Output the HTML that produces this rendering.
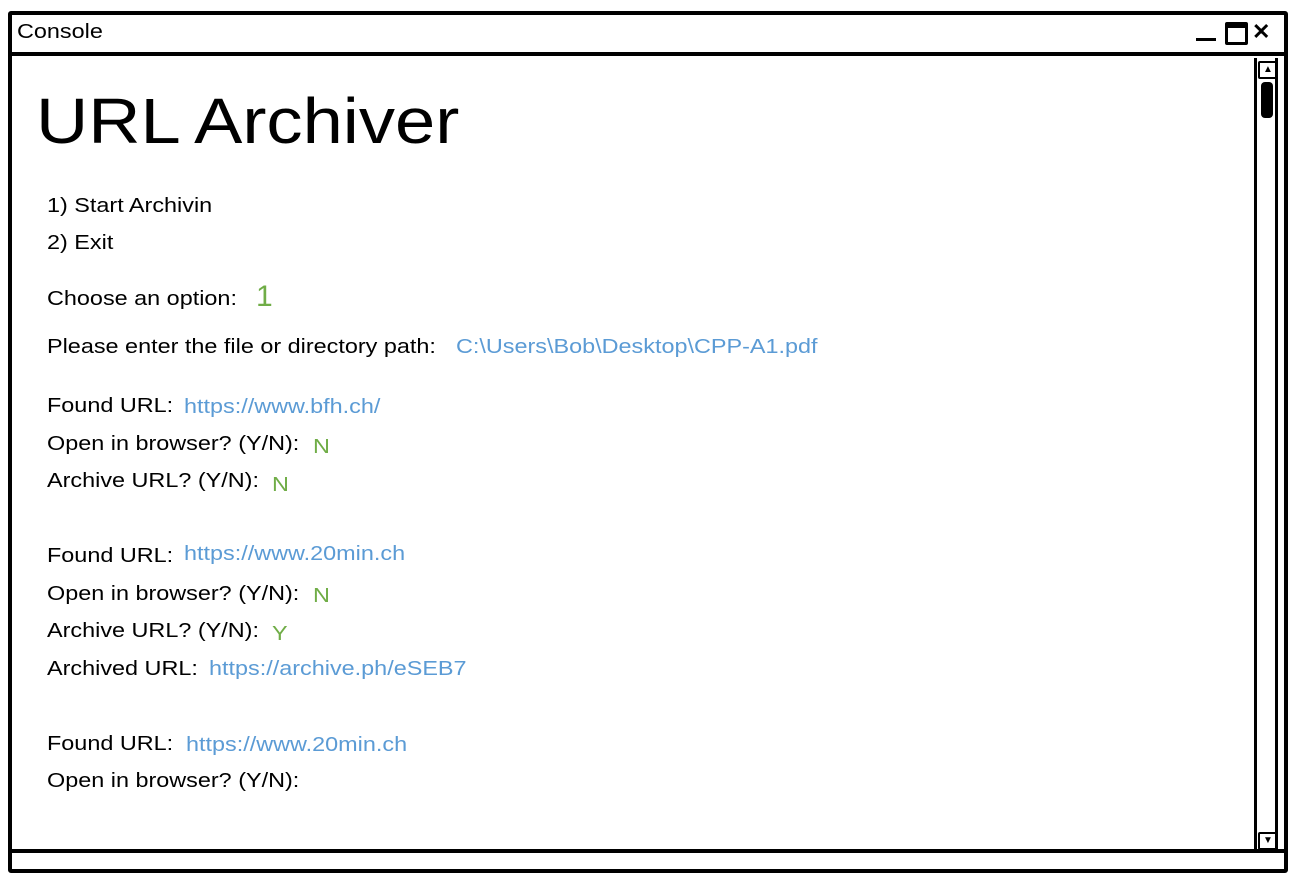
<!DOCTYPE html>
<html><head><style>
body{margin:0;width:1291px;height:886px;background:#fff;font-family:"Liberation Sans",sans-serif;position:relative;overflow:hidden}
.a{position:absolute;white-space:nowrap}
.t{font-size:20px;color:#000;transform:scaleX(1.17);transform-origin:left top}
.b{color:#5b9bd5}
.g{color:#70ad47}
</style></head><body>
<div class="a" style="left:8px;top:11px;width:1272px;height:854px;border:4px solid #000;border-radius:3px"></div>
<div class="a" style="left:8px;top:52px;width:1280px;height:4px;background:#000"></div>
<div class="a" style="left:8px;top:849px;width:1280px;height:4px;background:#000"></div>
<div class="a t" style="left:17px;top:21px">Console</div>
<div class="a" style="left:1196px;top:38px;width:20px;height:3px;background:#000"></div>
<div class="a" style="left:1225px;top:22px;width:17px;height:14px;border:3px solid #000;border-top-width:6px;border-radius:2px"></div>
<div class="a" style="left:1252px;top:19px;font-size:22px;font-weight:bold">✕</div>
<div class="a" style="left:1254px;top:58px;width:24px;height:791px;border-left:3px solid #000;border-right:3px solid #000;box-sizing:border-box"></div>
<div class="a" style="left:1258px;top:61px;width:16px;height:14px;border:2px solid #000;border-radius:2px;font-size:10px;text-align:center;line-height:14px">▲</div>
<div class="a" style="left:1261px;top:82px;width:12px;height:36px;background:#000;border-radius:4px"></div>
<div class="a" style="left:1258px;top:832px;width:16px;height:14px;border:2px solid #000;border-radius:2px;font-size:10px;text-align:center;line-height:14px">▼</div>
<div class="a" style="left:36px;top:84px;font-size:64px;transform:scaleX(1.13);transform-origin:left top">URL Archiver</div>
<div class="a t" style="left:47px;top:195px">1) Start Archivin</div>
<div class="a t" style="left:47px;top:232px">2) Exit</div>
<div class="a t" style="left:47px;top:288px">Choose an option:</div>
<div class="a g" style="left:256px;top:280px;font-size:30px">1</div>
<div class="a t" style="left:47px;top:336px">Please enter the file or directory path:</div>
<div class="a t b" style="left:456px;top:336px">C:\Users\Bob\Desktop\CPP-A1.pdf</div>
<div class="a t" style="left:47px;top:395px">Found URL:</div>
<div class="a t b" style="left:184px;top:396px">https://www.bfh.ch/</div>
<div class="a t" style="left:47px;top:433px">Open in browser? (Y/N):</div>
<div class="a t g" style="left:313px;top:436px">N</div>
<div class="a t" style="left:47px;top:470px">Archive URL? (Y/N):</div>
<div class="a t g" style="left:272px;top:474px">N</div>
<div class="a t" style="left:47px;top:545px">Found URL:</div>
<div class="a t b" style="left:184px;top:543px">https://www.20min.ch</div>
<div class="a t" style="left:47px;top:583px">Open in browser? (Y/N):</div>
<div class="a t g" style="left:313px;top:585px">N</div>
<div class="a t" style="left:47px;top:620px">Archive URL? (Y/N):</div>
<div class="a t g" style="left:272px;top:623px">Y</div>
<div class="a t" style="left:47px;top:658px">Archived URL:</div>
<div class="a t b" style="left:209px;top:658px">https://archive.ph/eSEB7</div>
<div class="a t" style="left:47px;top:733px">Found URL:</div>
<div class="a t b" style="left:186px;top:734px">https://www.20min.ch</div>
<div class="a t" style="left:47px;top:770px">Open in browser? (Y/N):</div>
</body></html>
